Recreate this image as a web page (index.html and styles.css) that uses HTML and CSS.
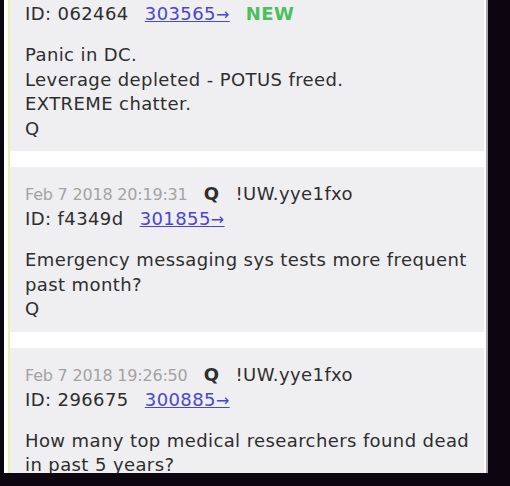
FILE: index.html
```html
<!DOCTYPE html>
<html lang="en">
<head>
    <meta charset="UTF-8">
    <meta name="viewport" content="width=device-width, initial-scale=1.0">
    <title>Q Drops</title>
    <link rel="stylesheet" href="styles.css">
</head>
<body>
    <div class="screen">
        <div class="thread">
            <div class="post">
                <div class="post-head">
                    <span class="date">Feb 7 2018 21:01:49</span>
                    <span class="name">Q</span>
                    <span class="trip">!UW.yye1fxo</span>
                </div>
                <div class="post-id">
                    ID: 062464
                    <a href="#" class="ref">303565<span class="arrow">&rarr;</span></a>
                    <span class="new">NEW</span>
                </div>
                <div class="post-body">
                    Panic in DC.<br>
                    Leverage depleted - POTUS freed.<br>
                    EXTREME chatter.<br>
                    Q
                </div>
            </div>

            <div class="post">
                <div class="post-head">
                    <span class="date">Feb 7 2018 20:19:31</span>
                    <span class="name">Q</span>
                    <span class="trip">!UW.yye1fxo</span>
                </div>
                <div class="post-id">
                    ID: f4349d
                    <a href="#" class="ref">301855<span class="arrow">&rarr;</span></a>
                </div>
                <div class="post-body">
                    Emergency messaging sys tests more frequent past month?<br>
                    Q
                </div>
            </div>

            <div class="post">
                <div class="post-head">
                    <span class="date">Feb 7 2018 19:26:50</span>
                    <span class="name">Q</span>
                    <span class="trip">!UW.yye1fxo</span>
                </div>
                <div class="post-id">
                    ID: 296675
                    <a href="#" class="ref">300885<span class="arrow">&rarr;</span></a>
                </div>
                <div class="post-body">
                    How many top medical researchers found dead in past 5 years?<br>
                    Q
                </div>
            </div>
        </div>
    </div>
</body>
</html>
```

FILE: styles.css
```css
:root {
    --frame-bg: #0b0610;
    --page-bg: #ffffff;
    --post-bg: #efeef1;
    --thread-line: #eeeeb4;
    --text-color: #2e2e2e;
    --muted: #a3a3a3;
    --link: #4a46d0;
    --new: #4bbf5c;
}

* {
    margin: 0;
    padding: 0;
    box-sizing: border-box;
}

body {
    background-color: var(--frame-bg);
    font-family: "DejaVu Sans", "Liberation Sans", sans-serif;
    color: var(--text-color);
}

.screen {
    width: 484px;
    height: 473px;
    margin-left: 4px;
    background-color: var(--page-bg);
    border-right: 2px solid #a9a9ad;
    overflow: hidden;
}

.thread {
    margin: -38px 2px 0 4px;
    border-left: 2px solid var(--thread-line);
}

.post {
    background-color: var(--post-bg);
    padding: 15px 8px 10px 15px;
    margin-bottom: 16px;
}

.post-head,
.post-id,
.post-body {
    font-size: 18px;
    letter-spacing: 0.4px;
}

.post-head {
    line-height: 24px;
}

.date {
    font-size: 16px;
    color: var(--muted);
    letter-spacing: -0.2px;
    margin-right: 10px;
}

.name {
    font-weight: 700;
    margin-right: 10px;
}

.post-id {
    line-height: 24px;
    margin-bottom: 16px;
}

.ref {
    color: var(--link);
    margin-left: 10px;
}

.arrow {
    font-size: 16px;
}

.new {
    color: var(--new);
    font-weight: 700;
    margin-left: 10px;
}

.post-body {
    line-height: 24.5px;
}
```
